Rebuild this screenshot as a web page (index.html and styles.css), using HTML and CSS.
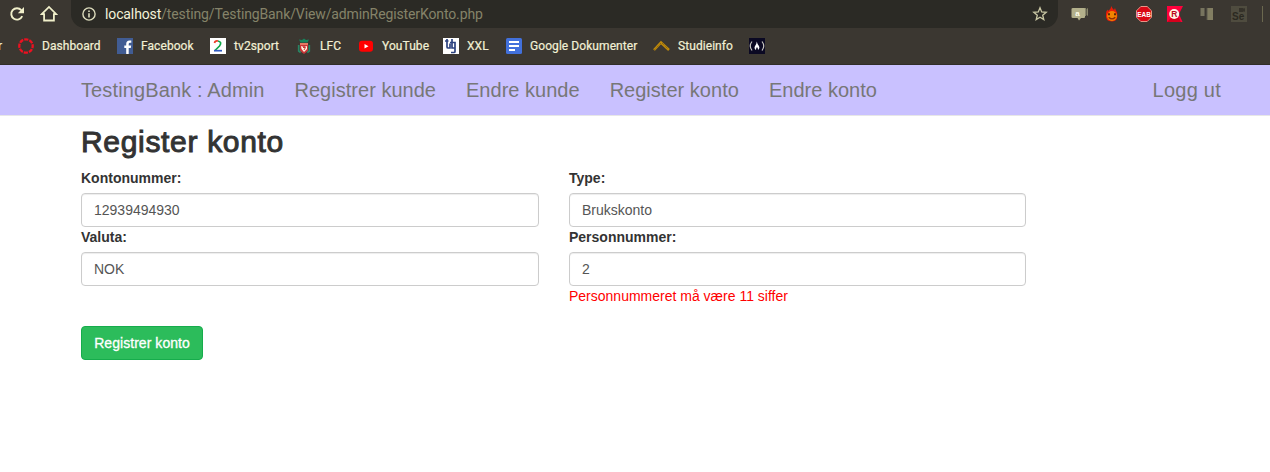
FILE: index.html
```html
<!DOCTYPE html>
<html lang="no">
<head>
<meta charset="utf-8">
<title>TestingBank : Admin</title>
<link rel="stylesheet" href="styles.css">
</head>
<body>
<header class="browser">
  <div class="toolbar">
    <svg class="reload" width="16" height="16" viewBox="0 0 16 16"><path d="M13.2 10.2A5.7 5.7 0 1 1 12.3 4.2" fill="none" stroke="#f0efca" stroke-width="1.9"/><path d="M15 1v6.2H8.8z" fill="#f0efca"/></svg>
    <svg class="home" width="18" height="18" viewBox="0 0 18 18"><path d="M1.7 9.2 9 1.9l7.3 7.3h-2.4v6.3H4.1V9.2z" fill="none" stroke="#f0efca" stroke-width="1.8"/></svg>
    <div class="address">
      <svg class="info" width="14" height="14" viewBox="0 0 14 14"><circle cx="7" cy="7" r="6.1" fill="none" stroke="#dddcbd" stroke-width="1.4"/><path d="M7 6.2v4.2M7 3.4v1.5" stroke="#dddcbd" stroke-width="1.6"/></svg>
      <span class="url"><span class="host">localhost</span>/testing/TestingBank/View/adminRegisterKonto.php</span>
      <svg class="star" width="16" height="16" viewBox="0 0 16 16"><path d="M8 1.8 9.7 6l4.5.3-3.5 2.9 1.1 4.4L8 11.2l-3.8 2.4 1.1-4.4L1.8 6.3 6.3 6z" fill="none" stroke="#c9c7a4" stroke-width="1.3"/></svg>
    </div>
    <div class="extensions">
      <svg width="18" height="16" viewBox="0 0 18 16"><path d="M12 2h3v8h-3zM15.5 3l1.5-1v8l-1.500-1z" fill="#88866b"/><path d="M2 2h11q1 0 1 1v8q0 1-1 1h-3l-2 2.500L6.500 12H2q-1.500 0-1.500-1V3q0-1 1.500-1z" fill="#b3b08b"/><text x="4.300" y="10" class="glyph quote">a</text></svg>
      <svg width="16" height="16" viewBox="0 0 16 16"><path d="M7.500 0Q8 2.500 10 4l1-2q.5 2 2 4.500 2 9-5 9T2 8q0-3 1.500-4.500L4 5q3-2 3.500-5z" fill="#e91b08"/><circle cx="8" cy="10" r="4.900" fill="#f18400"/><path d="M5 7.300v2M11 7.300v2" stroke="#4d1c08" stroke-width="1.800"/><path d="M4.700 11.200Q8 14.500 11.300 11.200" stroke="#8b2b05" stroke-width="1.300" fill="none"/></svg>
      <svg width="18" height="18" viewBox="0 0 18 18"><path d="M5.800 1.500h6.400l4.300 4.300v6.400l-4.300 4.300H5.800l-4.300-4.300V5.800z" fill="#d90815" stroke="#e69587" stroke-width="1"/><text x="9" y="11.500" text-anchor="middle" class="glyph eab">EAB</text></svg>
      <svg width="16" height="16" viewBox="0 0 16 16"><path d="M0 0h16l-4 8 3.500 8H0z" fill="#ff003c"/><path d="m0 16 5-5 7 1 2 4z" fill="#d5001c"/><circle cx="7.200" cy="8" r="5" fill="#fff5e5"/><text x="7.200" y="11" text-anchor="middle" class="glyph rak">R</text></svg>
      <svg width="16" height="16" viewBox="0 0 16 16"><path d="M1.500 2h4v8h-4z" fill="#77745e"/><path d="M8 2h6v12H8z" fill="#827e62"/><path d="M5.500 2v8M8 2v12" stroke="#59564a" stroke-width="1"/></svg>
      <svg width="16" height="16" viewBox="0 0 16 16"><path d="M0 0h16v16H0z" fill="#4f4c3f"/><path d="M8 2h4.500v1l1.500-1v4l-1.500-1v1H8z" fill="#35322a"/><text x="1" y="14" class="glyph se">Se</text></svg>
      <i class="divider"></i>
    </div>
  </div>
  <nav class="bookmarks">
    <span class="cut">r</span>
    <a><svg width="16" height="16" viewBox="0 0 16 16"><circle cx="8" cy="8" r="6.700" fill="none" stroke="#ee1020" stroke-width="2.300" stroke-dasharray="4.200 1.060" stroke-dashoffset="2"/></svg>Dashboard</a>
    <a><svg width="16" height="16" viewBox="0 0 16 16"><path d="M0 0h16v16H0z" fill="#415c93"/><path d="M9.200 16v-6H7.300V7.500h1.900V6q0-3.500 3.300-3.500h1.800v2.300H13q-1.300 0-1.300 1.300v1.400h2.500l-.4 2.500h-2.100v6z" fill="#fff"/></svg>Facebook</a>
    <a><svg width="16" height="16" viewBox="0 0 16 16"><path d="M0 0h16v16H0z" fill="#fff"/><path d="M4.500 5q.5-2.500 3.500-2" fill="none" stroke="#ee3a27" stroke-width="1.700"/><path d="M8 3q4.500 1 1.500 5L5 12.500" fill="none" stroke="#10a849" stroke-width="1.700"/><path d="M4 12.700h8" stroke="#315bc1" stroke-width="1.700"/></svg>tv2sport</a>
    <a><svg width="16" height="16" viewBox="0 0 16 16"><path d="m8 .5 2 1.500 3-.5-1.500 3h-7L3 1.500 6 2z" fill="#17845c"/><path d="M4 5h8v8l-4 3-4-3z" fill="#c93538"/><path d="M2.700 7v6l2 1.500M13.300 7v6l-2 1.500" fill="none" stroke="#298564" stroke-width="1.700"/><path d="M4 6h8" stroke="#f08e70" stroke-width="1.500"/><path d="m5 8 3 1 3-1v3l-3 3-2.500-3z" fill="#fff1dc"/><path d="M7 9.500h2.500L8 12" fill="none" stroke="#c93538"/></svg>LFC</a>
    <a><svg width="16" height="16" viewBox="0 0 16 16"><rect x="1" y="2.700" width="14" height="11" rx="3" fill="#f00"/><path d="m6.500 6 4 2.200-4 2.200z" fill="#fff"/></svg>YouTube</a>
    <a><svg width="16" height="16" viewBox="0 0 16 16"><path d="M0 0h16v16H0z" fill="#fff"/><path d="M4 1v8q0 1 1.200 1H7V5.500M2 3h3.500M7 4.500h5v9q0 1-1 1H8M12 10H9V1" fill="none" stroke="#2d4380" stroke-width="1.700"/></svg>XXL</a>
    <a><svg width="16" height="16" viewBox="0 0 16 16"><rect width="16" height="16" rx="1.500" fill="#4270db"/><path d="M3 4h10M3 8h10M3 12h6" stroke="#fff" stroke-width="1.800"/></svg>Google Dokumenter</a>
    <a><svg width="17" height="16" viewBox="0 0 17 16"><path d="m1 12 7-7.500 8 7.500" fill="none" stroke="#c18b0a" stroke-width="2.500"/><path d="m1.500 11.800 6.600-7M9 5l6 6" stroke="#725615" stroke-width=".9" stroke-dasharray="1 1"/></svg>Studieinfo</a>
    <a><svg width="16" height="16" viewBox="0 0 16 16"><path d="M0 0h16v16H0z" fill="#0b0923"/><path d="M3 3.500q-3.500 4.500 0 9M13 3.500q3.500 4.500 0 9" fill="none" stroke="#c6c5bf" stroke-width="1.200"/><path d="M7.800 3.500q.3 2 2 4.200 1.500 2.500-.8 4.300 0-2-1-3-1 1-1 3-2.500-1.700-.8-4.300Q7.700 5.500 7.800 3.500z" fill="#fff"/></svg></a>
  </nav>
</header>
<nav class="navbar">
  <div class="links"><a class="brand">TestingBank : Admin</a><a>Registrer kunde</a><a>Endre kunde</a><a>Register konto</a><a>Endre konto</a></div>
  <a class="logout">Logg ut</a>
</nav>
<main class="content">
  <h1>Register konto</h1>
  <form>
    <div class="fields">
      <div><label for="number">Kontonummer:</label><input id="number" value="12939494930"></div>
      <div><label for="type">Type:</label><input id="type" value="Brukskonto"></div>
      <div><label for="currency">Valuta:</label><input id="currency" value="NOK"></div>
      <div><label for="person">Personnummer:</label><input id="person" value="2"><p class="error">Personnummeret må være 11 siffer</p></div>
    </div>
    <button type="button">Registrer konto</button>
  </form>
</main>
</body>
</html>
```

FILE: styles.css
```css
* { box-sizing: border-box; }
body { margin: 0; background: #fff; color: #333; font: 14px/20px "Liberation Sans", Arial, sans-serif; }
svg { display: block; flex: none; }
.browser { height: 65px; background: #3b3731; border-bottom: 1px solid #302d28; overflow: hidden; font-family: Inter, sans-serif; }
.toolbar { display: flex; align-items: center; height: 28px; padding-left: 9px; }
.home { margin-left: 15px; }
.address { display: flex; align-items: center; width: 987px; height: 28px; margin-left: 13px; padding: 0 10px 0 11px; background: #2b2a25; border-radius: 0 0 14px 14px; }
.url { margin-left: 9px; color: #858369; font: 14px/20px Roboto, sans-serif; letter-spacing: -.12px; white-space: nowrap; }
.host { color: #f3f2d9; }
.star { margin-left: auto; }
.extensions { display: grid; grid-template-columns: 33px 31px 32px 32px 32px 31px 1px; align-items: center; margin-left: 13px; }
.divider { width: 1px; height: 16px; background: #6b684f; }
.glyph { font-family: "Liberation Sans", sans-serif; font-weight: bold; }
.quote { font-size: 8px; fill: #fffee9; }
.eab { font-size: 6.5px; fill: #fff; }
.rak { font-size: 8.5px; fill: #ba071b; }
.se { font-size: 10px; fill: #2b2921; }
.bookmarks { display: grid; grid-template-columns: 18px 99px 93px 86px 62px 85px 63px 147px 96px 16px; align-items: center; height: 36px; color: #f2f0d5; font: 12px/18px Roboto, sans-serif; letter-spacing: .07px; -webkit-text-stroke: .2px #f2f0d5; }
.bookmarks a { display: flex; align-items: center; gap: 8px; white-space: nowrap; }
.bookmarks svg { -webkit-text-stroke: 0; }
.cut { margin-left: -2px; }
.navbar { display: flex; justify-content: space-between; height: 51px; padding: 15px 49px 15px 81px; background: #c9c1ff; border-bottom: 1px solid #e7e7e7; color: #777; font-size: 20px; line-height: 20px; letter-spacing: .02px; }
.brand { letter-spacing: .12px; }
.logout { letter-spacing: .25px; }
.links { display: flex; gap: 30px; }
.content { width: 1026px; padding: 9px 0 0 81px; }
h1 { margin: 0 0 10px; font-size: 30px; line-height: 33px; font-weight: normal; letter-spacing: .68px; -webkit-text-stroke: 1px #333; }
.fields { display: grid; grid-template-columns: 458px 457px; column-gap: 30px; }
.fields label { display: block; margin-bottom: 5px; font-weight: bold; }
input { display: block; width: 100%; height: 34px; padding: 6px 12px; border: 1px solid #ccc; border-radius: 4px; box-shadow: inset 0 1px 1px rgba(0,0,0,.075); color: #555; font: inherit; }
.error { margin: 0; color: red; }
button { display: block; width: 122px; height: 34px; margin-top: 20px; padding: 0 12px; border: 1px solid #16ac4c; border-radius: 4px; background: #2cbc5b; color: #fff; font: inherit; letter-spacing: .05px; -webkit-text-stroke: .3px #fff; white-space: nowrap; }
```
